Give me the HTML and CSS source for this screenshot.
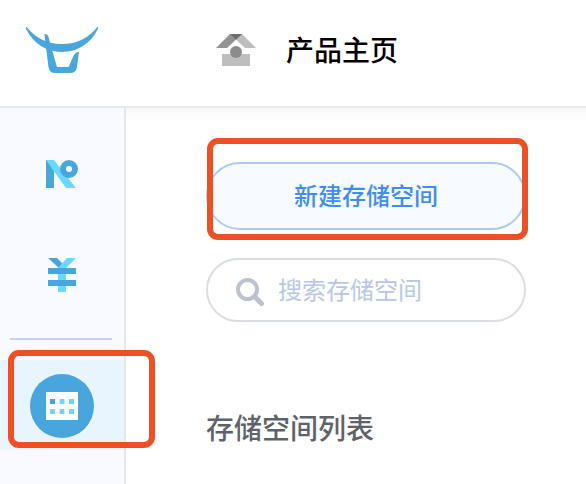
FILE: index.html
```html
<!DOCTYPE html>
<html lang="zh-CN">
<head>
<meta charset="utf-8">
<title>存储空间</title>
<link rel="stylesheet" href="styles.css">
</head>
<body>
<header class="header">
  <svg class="logo" width="76" height="52" viewBox="24 24 76 52" fill="#48a6dc">
    <path d="M26.200 26.500C35 38 47 44 62 44S89 38 97.800 26.500Q98.600 27.500 97.600 29.500C91 43 78 52 62 52S33 43 26.400 29.500Q25.400 27.500 26.200 26.500Z"/>
    <path d="M44.500 34Q47.500 33.500 48.500 37L52 50L57 67H68.500L73 57Q75 51.800 79 52L77 67Q76 73 70 73H55Q49.500 73 48.500 67L46.200 49Z"/>
  </svg>
  <svg class="home" width="40" height="33" viewBox="216 34 40 33">
    <path fill="#bebebe" d="M222 54h28v12h-28zM230 34h12l14 14h-11z"/>
    <path fill="#939393" d="M230 34h12l-15 14h-11z"/>
    <path fill="#6d6d6d" d="M230 34h12l-6 5.600z"/>
    <circle cx="236" cy="52" r="6" fill="#8c8c8c"/>
  </svg>
  <h1 class="title">产品主页</h1>
</header>
<div class="body">
  <nav class="sidebar">
    <svg class="nav-icon" width="34" height="30" viewBox="46 159 34 30">
      <path fill="#48a6dc" d="M46 160h8v28h-8z"/>
      <path fill="#69d9ff" d="M46 160h8l22 28H66z"/>
      <circle cx="69" cy="169" r="6" fill="none" stroke="#48a6dc" stroke-width="6"/>
    </svg>
    <svg class="nav-icon yuan" width="28" height="34" viewBox="48 258 28 34">
      <path fill="#48a6dc" d="M48 258h9l8 8-4 4z"/>
      <path fill="#69d9ff" d="M67 258h9L66 268v24h-8v-24z"/>
      <path fill="#48a6dc" d="M48 268h28v6H48zM48 280h28v6H48z"/>
    </svg>
    <div class="divider"></div>
    <div class="active">
      <svg width="64" height="64" viewBox="30 374 64 64">
        <circle cx="62" cy="406" r="32" fill="#48a6dc"/>
        <path fill="#fff" d="M46 392h32v28H46z"/>
        <path fill="#48a6dc" d="M50 399h5v5h-5z"/>
        <path fill="#69d9ff" d="M60 399h4v5h-4zM69 399h5v5h-5zM50 409h5v5h-5zM60 409h4v5h-4zM69 409h5v5h-5z"/>
        <path fill="#c9f0ff" d="M59 399h1v5h-1zM59 409h1v5h-1zM64 399h1v5h-1zM64 409h1v5h-1z"/>
      </svg>
    </div>
  </nav>
  <main class="main">
    <button class="create">新建存储空间</button>
    <div class="search">
      <svg width="30" height="30" viewBox="235 277 30 30" fill="none" stroke="#bdc3ce">
        <circle cx="247.500" cy="289.500" r="9.500" stroke-width="4"/>
        <path d="M255 297l6.500 6.500" stroke-width="5" stroke-linecap="round"/>
      </svg>
      <span>搜索存储空间</span>
    </div>
    <h2 class="list-title">存储空间列表</h2>
  </main>
</div>
<div class="mark mark-create"></div>
<div class="mark mark-nav"></div>
</body>
</html>
```
FILE: styles.css
```css
* { box-sizing: border-box; }
body {
  position: relative;
  margin: 0;
  height: 484px;
  overflow: hidden;
  display: flex;
  flex-direction: column;
  background: #fff;
  font-family: "Noto Sans CJK SC", sans-serif;
}
svg { display: block; flex: none; }
.header {
  height: 108px;
  flex: none;
  display: flex;
  align-items: flex-start;
  padding: 24px 24px 0;
  border-bottom: 2px solid #e8e9eb;
}
.home { margin: 10px 30px 0 116px; }
.title {
  margin: 5px 0 0;
  font-size: 28px;
  line-height: 40px;
  font-weight: 500;
  color: #000;
}
.body { flex: 1; display: flex; min-height: 0; }
.sidebar {
  width: 126px;
  flex: none;
  padding-top: 51px;
  background: #f8faff;
  border-right: 2px solid #e4e7f0;
}
.nav-icon { margin-left: 46px; }
.yuan { margin: 69px 0 0 48px; }
.divider { height: 2px; margin: 46px 12px 20px 10px; background: #c5d0fb; }
.active { height: 90px; padding: 14px 30px; background: #e8f4fe; }
.main {
  flex: 1;
  padding: 54px 60px 0 80px;
  background: linear-gradient(#f7f7f7, #fff 13px);
}
.create {
  display: block;
  width: 320px;
  height: 68px;
  padding: 0 0 3px;
  border: 2px solid #a9cafa;
  border-radius: 34px;
  background: #f7faff;
  color: #3f8cf4;
  font: 500 24px/60px "Noto Sans CJK SC", sans-serif;
}
.search {
  width: 320px;
  height: 64px;
  margin-top: 28px;
  padding-left: 27px;
  display: flex;
  align-items: center;
  gap: 13px;
  border: 2px solid #dadde2;
  border-radius: 32px;
  color: #b8c7e6;
  font-size: 24px;
  line-height: 56px;
  font-weight: 400;
}
.search svg { margin-top: 4px; }
.search span { padding-bottom: 3px; }
.list-title {
  margin: 85px 0 0;
  font-size: 28px;
  line-height: 40px;
  font-weight: 500;
  color: #5f6369;
}
.mark {
  position: absolute;
  border: 6px solid #ee5026;
  border-radius: 11px;
}
.mark-create { left: 207px; top: 138px; width: 321px; height: 102px; }
.mark-nav { left: 8px; top: 350px; width: 147px; height: 98px; }
```
